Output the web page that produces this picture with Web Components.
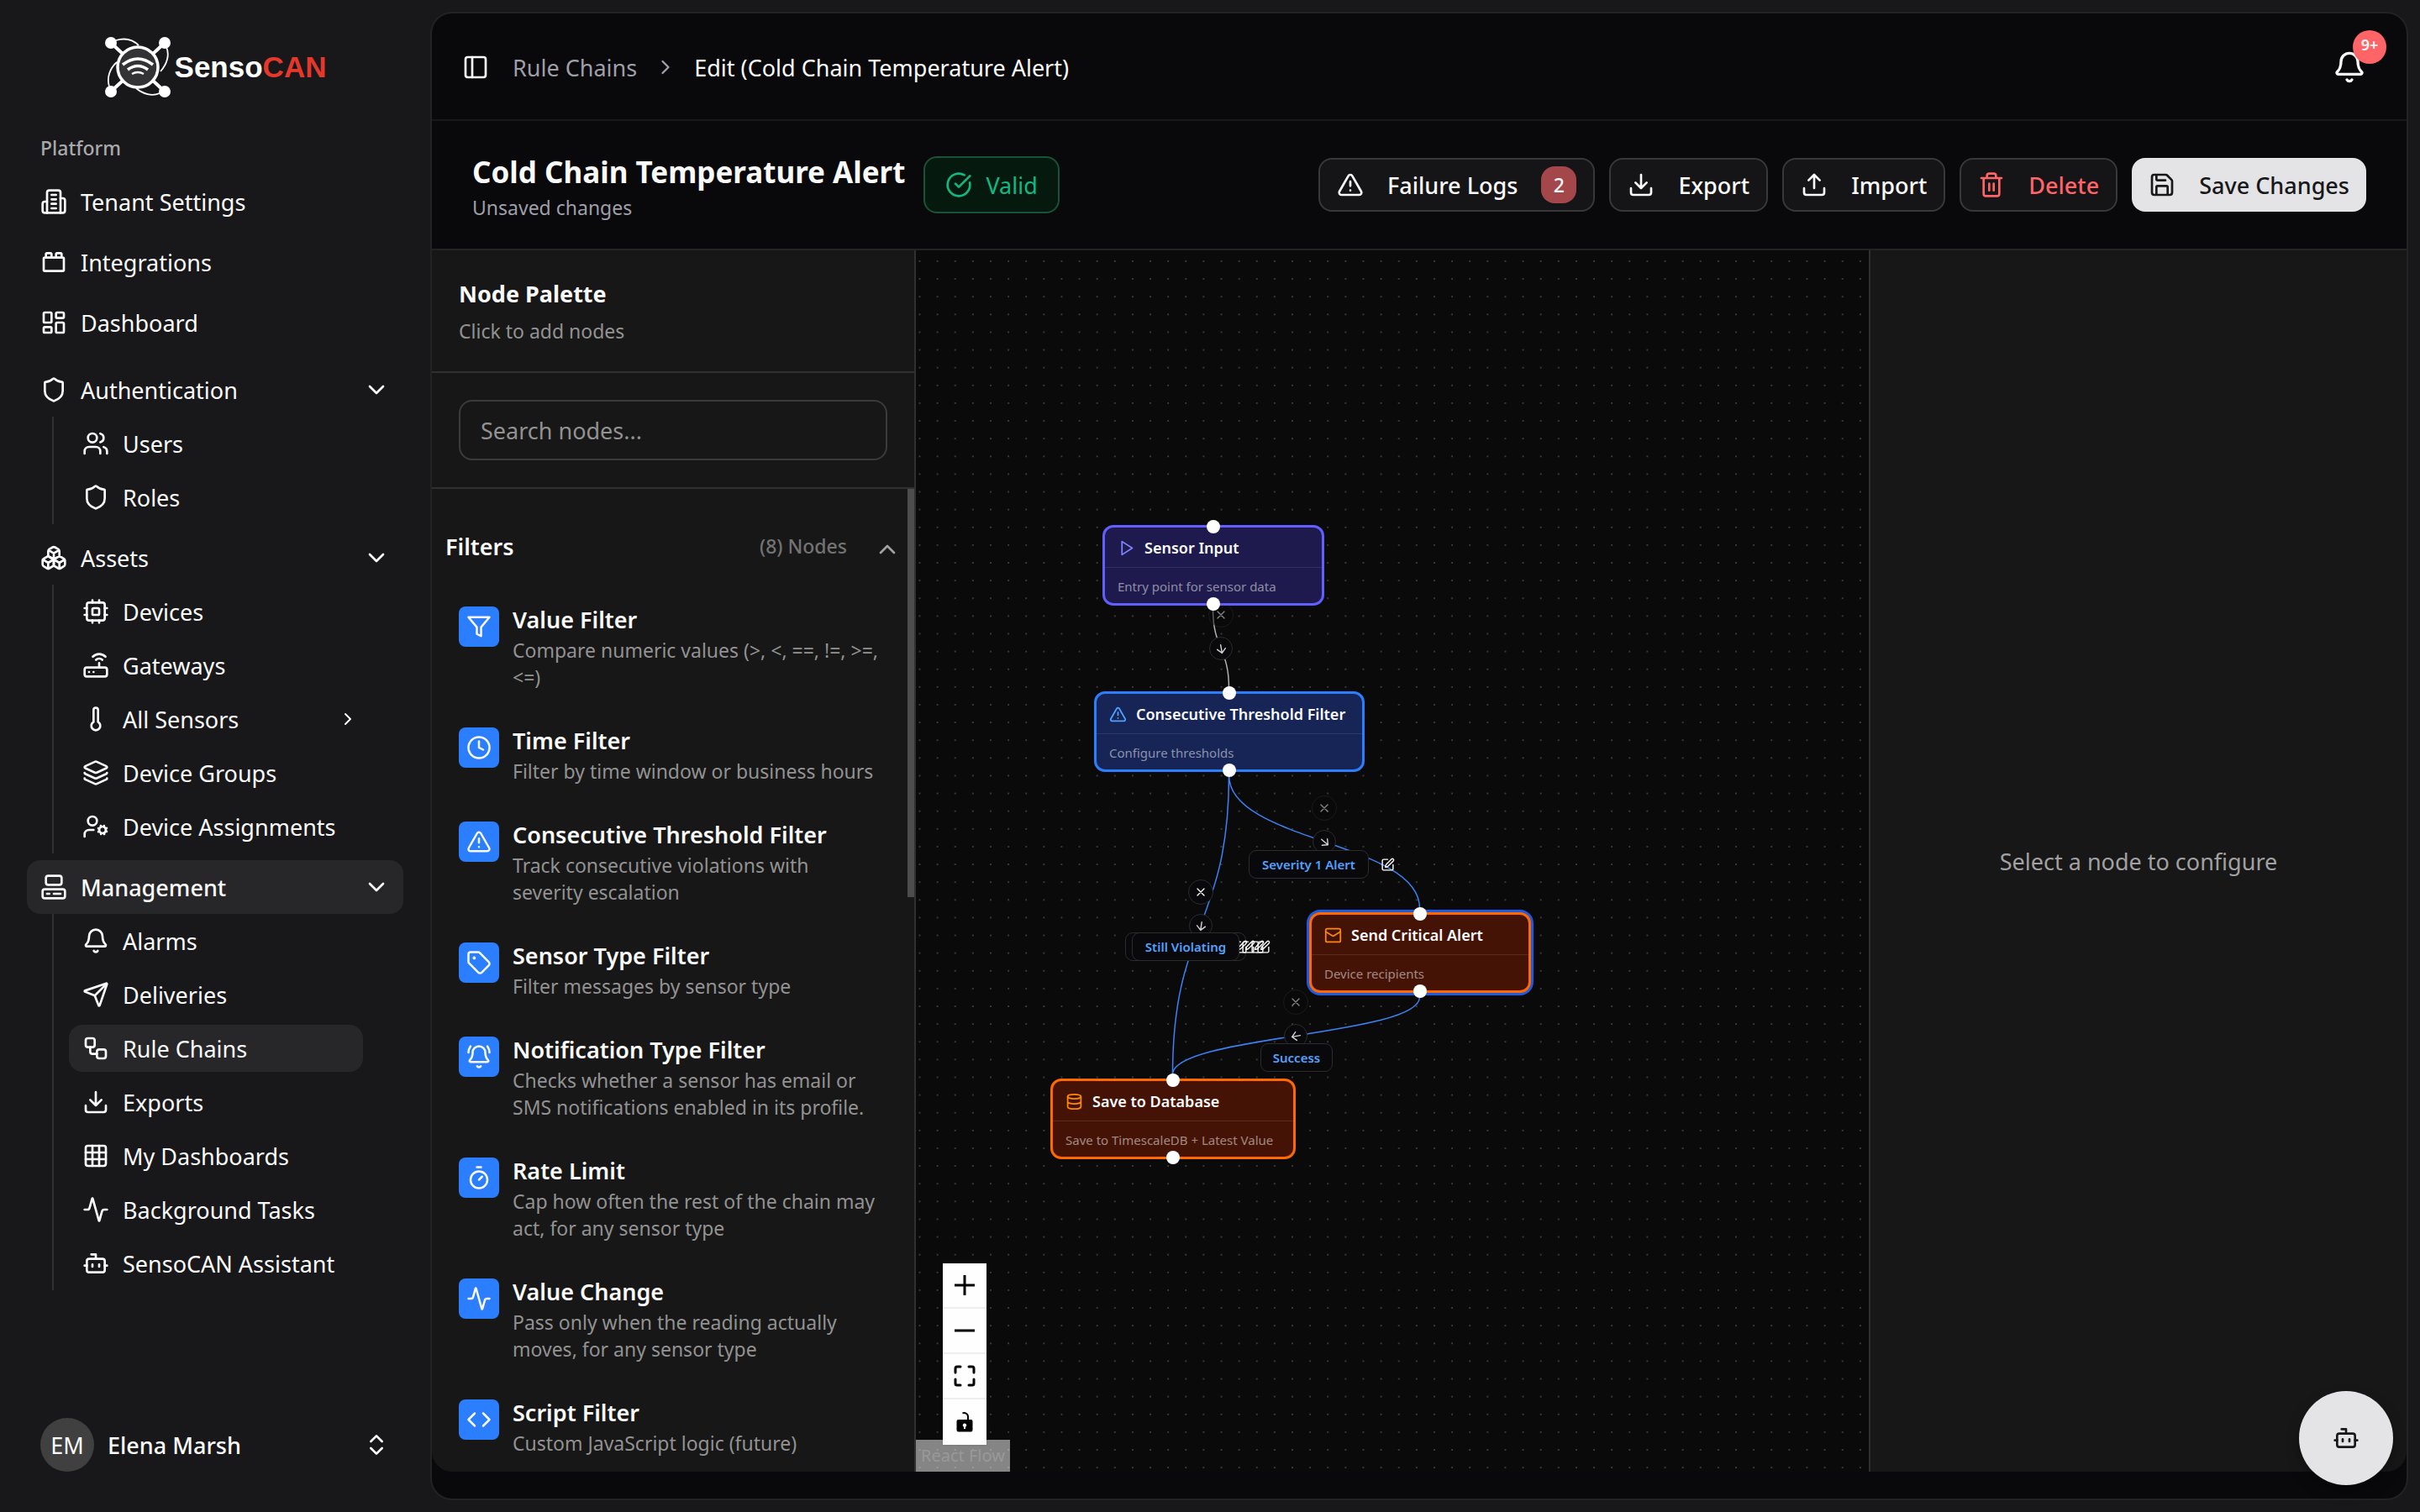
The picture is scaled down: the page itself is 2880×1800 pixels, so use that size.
<!DOCTYPE html>
<html lang="en">
<head>
<meta charset="utf-8">
<meta name="viewport" content="width=device-width, initial-scale=1">
<title>SensoCAN - Rule Chains</title>
<style>
  html, body {
    margin: 0;
    height: 100%;
    background: #18181b;
    color: #fafafa;
    font-family: "Noto Sans", "Open Sans", sans-serif;
    font-size: 27px;
  }
</style>
</head>
<body>
<app-shell></app-shell>

<script>
// Stroke icons on a 24x24 grid
const ICONS = {
  building: '<path d="M6 22V4a2 2 0 0 1 2-2h8a2 2 0 0 1 2 2v18Z"/><path d="M6 12H4a2 2 0 0 0-2 2v6a2 2 0 0 0 2 2h2M18 9h2a2 2 0 0 1 2 2v9a2 2 0 0 1-2 2h-2M10 6h4M10 10h4M10 14h4M10 18h4"/>',
  brick: '<rect width="18" height="12" x="3" y="8" rx="1"/><path d="M10 8V5c0-.6-.4-1-1-1H6a1 1 0 0 0-1 1v3M19 8V5c0-.6-.4-1-1-1h-3a1 1 0 0 0-1 1v3"/>',
  dashboard: '<rect width="7" height="9" x="3" y="3" rx="1"/><rect width="7" height="5" x="14" y="3" rx="1"/><rect width="7" height="9" x="14" y="12" rx="1"/><rect width="7" height="5" x="3" y="16" rx="1"/>',
  shield: '<path d="M20 13c0 5-3.5 7.5-7.66 8.95a1 1 0 0 1-.67-.01C7.5 20.5 4 18 4 13V6a1 1 0 0 1 1-1c2 0 4.5-1.2 6.24-2.72a1.17 1.17 0 0 1 1.52 0C14.51 3.81 17 5 19 5a1 1 0 0 1 1 1z"/>',
  users: '<path d="M16 21v-2a4 4 0 0 0-4-4H6a4 4 0 0 0-4 4v2M22 21v-2a4 4 0 0 0-3-3.87M16 3.13a4 4 0 0 1 0 7.75"/><circle cx="9" cy="7" r="4"/>',
  boxes: '<path d="M2.97 12.92A2 2 0 0 0 2 14.63v3.24a2 2 0 0 0 .97 1.71l3 1.8a2 2 0 0 0 2.06 0L12 19v-5.5l-5-3-4.03 2.42Z"/><path d="m7 16.5-4.74-2.85M7 16.5l5-3M7 16.5v5.17M12 13.5V19l3.97 2.38a2 2 0 0 0 2.06 0l3-1.8a2 2 0 0 0 .97-1.71v-3.24a2 2 0 0 0-.97-1.71L17 10.5l-5 3ZM17 16.5l-5-3M17 16.5l4.74-2.85M17 16.5v5.17M7.97 4.42A2 2 0 0 0 7 6.13v4.37l5 3 5-3V6.13a2 2 0 0 0-.97-1.71l-3-1.8a2 2 0 0 0-2.06 0l-3 1.8ZM12 8 7.26 5.15M12 8l4.74-2.85M12 13.5V8"/>',
  cpu: '<rect width="16" height="16" x="4" y="4" rx="2"/><rect width="6" height="6" x="9" y="9" rx="1"/><path d="M15 2v2M15 20v2M2 15h2M2 9h2M20 15h2M20 9h2M9 2v2M9 20v2"/>',
  router: '<rect width="20" height="8" x="2" y="14" rx="2"/><path d="M6.01 18H6M10.01 18H10M15 10v4M17.84 7.17a4 4 0 0 0-5.66 0M20.66 4.34a8 8 0 0 0-11.31 0"/>',
  thermometer: '<path d="M14 4v10.54a4 4 0 1 1-4 0V4a2 2 0 0 1 4 0Z"/>',
  layers: '<path d="M12.83 2.18a2 2 0 0 0-1.66 0L2.6 6.08a1 1 0 0 0 0 1.83l8.58 3.91a2 2 0 0 0 1.66 0l8.58-3.9a1 1 0 0 0 0-1.83z"/><path d="M2 12a1 1 0 0 0 .58.91l8.6 3.91a2 2 0 0 0 1.65 0l8.58-3.9A1 1 0 0 0 22 12M2 17a1 1 0 0 0 .58.91l8.6 3.91a2 2 0 0 0 1.65 0l8.58-3.9A1 1 0 0 0 22 17"/>',
  userCog: '<circle cx="18" cy="15" r="3"/><circle cx="9" cy="7" r="4"/><path d="M10 15H6a4 4 0 0 0-4 4v2M21.7 16.4l-.9-.3M15.2 13.9l-.9-.3M16.6 18.7l.3-.9M19.1 12.2l.3-.9M19.6 18.7l-.4-1M16.8 12.3l-.4-1M14.3 16.6l1-.4M20.7 13.8l1-.4"/>',
  computer: '<rect width="14" height="8" x="5" y="2" rx="2"/><rect width="20" height="8" x="2" y="14" rx="2"/><path d="M6 18h2M12 18h6"/>',
  bell: '<path d="M10.268 21a2 2 0 0 0 3.464 0M3.262 15.326A1 1 0 0 0 4 17h16a1 1 0 0 0 .74-1.673C19.41 13.956 18 12.499 18 8A6 6 0 0 0 6 8c0 4.499-1.411 5.956-2.738 7.326"/>',
  bellRing: '<path d="M10.268 21a2 2 0 0 0 3.464 0M22 8c0-2.3-.8-4.3-2-6M3.262 15.326A1 1 0 0 0 4 17h16a1 1 0 0 0 .74-1.673C19.41 13.956 18 12.499 18 8A6 6 0 0 0 6 8c0 4.499-1.411 5.956-2.738 7.326M4 2C2.8 3.7 2 5.7 2 8"/>',
  send: '<path d="M14.536 21.686a.5.5 0 0 0 .937-.024l6.5-19a.496.496 0 0 0-.635-.635l-19 6.5a.5.5 0 0 0-.024.937l7.93 3.18a2 2 0 0 1 1.112 1.11zM21.854 2.147l-10.94 10.939"/>',
  workflow: '<rect width="8" height="8" x="3" y="3" rx="2"/><path d="M7 11v4a2 2 0 0 0 2 2h4"/><rect width="8" height="8" x="13" y="13" rx="2"/>',
  download: '<path d="M12 15V3M21 15v4a2 2 0 0 1-2 2H5a2 2 0 0 1-2-2v-4M7 10l5 5 5-5"/>',
  upload: '<path d="M12 3v12M17 8l-5-5-5 5M21 15v4a2 2 0 0 1-2 2H5a2 2 0 0 1-2-2v-4"/>',
  grid: '<rect width="18" height="18" x="3" y="3" rx="2"/><path d="M3 9h18M3 15h18M9 3v18M15 3v18"/>',
  activity: '<path d="M22 12h-2.48a2 2 0 0 0-1.93 1.46l-2.35 8.36a.25.25 0 0 1-.48 0L9.24 2.18a.25.25 0 0 0-.48 0l-2.35 8.36A2 2 0 0 1 4.49 12H2"/>',
  bot: '<path d="M12 8V4H8"/><rect width="16" height="12" x="4" y="8" rx="2"/><path d="M2 14h2M20 14h2M15 13v2M9 13v2"/>',
  down: '<path d="m6 9 6 6 6-6"/>',
  up: '<path d="m18 15-6-6-6 6"/>',
  right: '<path d="m9 18 6-6-6-6"/>',
  upDown: '<path d="m7 15 5 5 5-5M7 9l5-5 5 5"/>',
  panel: '<rect width="18" height="18" x="3" y="3" rx="2"/><path d="M9 3v18"/>',
  check: '<path d="M21.801 10A10 10 0 1 1 17 3.335M9 11l3 3L22 4"/>',
  alert: '<path d="m21.73 18-8-14a2 2 0 0 0-3.48 0l-8 14A2 2 0 0 0 4 21h16a2 2 0 0 0 1.73-3M12 9v4M12 17h.01"/>',
  trash: '<path d="M3 6h18M19 6v14a2 2 0 0 1-2 2H7a2 2 0 0 1-2-2V6M8 6V4a2 2 0 0 1 2-2h4a2 2 0 0 1 2 2v2M10 11v6M14 11v6"/>',
  save: '<path d="M15.2 3a2 2 0 0 1 1.4.6l3.8 3.8a2 2 0 0 1 .6 1.4V19a2 2 0 0 1-2 2H5a2 2 0 0 1-2-2V5a2 2 0 0 1 2-2zM17 21v-7a1 1 0 0 0-1-1H8a1 1 0 0 0-1 1v7M7 3v4a1 1 0 0 0 1 1h7"/>',
  funnel: '<path d="M22 3H2l8 9.46V19l4 2v-8.54L22 3z"/>',
  clock: '<circle cx="12" cy="12" r="10"/><path d="M12 6v6l4 2"/>',
  tag: '<path d="M12.586 2.586A2 2 0 0 0 11.172 2H4a2 2 0 0 0-2 2v7.172a2 2 0 0 0 .586 1.414l8.704 8.704a2.426 2.426 0 0 0 3.42 0l6.58-6.58a2.426 2.426 0 0 0 0-3.42z"/><circle cx="7.5" cy="7.5" r=".5" fill="currentColor"/>',
  timer: '<path d="M10 2h4M12 14l3-3"/><circle cx="12" cy="14" r="8"/>',
  code: '<path d="m16 18 6-6-6-6M8 6l-6 6 6 6"/>',
  play: '<path d="m6 3 14 9-14 9z"/>',
  mail: '<rect width="20" height="18" x="2" y="3" rx="2"/><path d="m22 7-8.97 5.7a1.94 1.94 0 0 1-2.06 0L2 7"/>',
  database: '<ellipse cx="12" cy="5" rx="9" ry="3"/><path d="M3 5v14a9 3 0 0 0 18 0V5M3 12a9 3 0 0 0 18 0"/>',
  pen: '<path d="M12 3H5a2 2 0 0 0-2 2v14a2 2 0 0 0 2 2h14a2 2 0 0 0 2-2v-7"/><path d="M18.375 2.625a1 1 0 0 1 3 3l-9.013 9.014a2 2 0 0 1-.853.505l-2.873.84a.5.5 0 0 1-.62-.62l.84-2.873a2 2 0 0 1 .506-.852z"/>',
  arrow: '<path d="M5 12h14M12 5l7 7-7 7"/>',
  close: '<path d="M18 6 6 18M6 6l12 12"/>',
  plus: '<path stroke-width="3" stroke-linecap="butt" d="M12 0v24M0 12h24"/>',
  minus: '<path stroke-width="3" stroke-linecap="butt" d="M0 12h24"/>',
  fit: '<path stroke-width="3" d="M1 8V3a2 2 0 0 1 2-2h4M17 1h4a2 2 0 0 1 2 2v5M23 16v5a2 2 0 0 1-2 2h-4M7 23H3a2 2 0 0 1-2-2v-5"/>',
  unlock: '<path fill="currentColor" stroke="none" fill-rule="evenodd" d="M5 9h10V5.500a3.500 3.500 0 0 0-5-3.200L9 .7A5.500 5.500 0 0 1 17 5.500V9h2.500a2 2 0 0 1 2 2v10.500a2 2 0 0 1-2 2h-15a2 2 0 0 1-2-2V11a2 2 0 0 1 2-2zm7 4.500a2.200 2.200 0 0 0-1 4.200V20h2v-2.300a2.200 2.200 0 0 0-1-4.200z"/>'
};

function define(name, render) {
  customElements.define(name, class extends HTMLElement {
    connectedCallback() {
      if (this.shadowRoot) return;
      this.attachShadow({ mode: 'open' }).innerHTML = render(this);
    }
  });
}

define('ui-icon', el => `
  <style>
    :host { display: inline-flex; flex: none; width: var(--icon, 32px); height: var(--icon, 32px); }
    svg {
      width: 100%; height: 100%; overflow: visible;
      fill: none; stroke: currentColor; stroke-width: 2;
      stroke-linecap: round; stroke-linejoin: round;
    }
  </style>
  <svg viewBox="0 0 24 24" aria-hidden="true">${ICONS[el.getAttribute('name')]}</svg>
`);

/* ---------- Sidebar ---------- */

define('brand-logo', () => `
  <style>
    :host {
      display: flex; align-items: center; justify-content: center; gap: 4px;
      box-sizing: border-box; height: 144px; padding-top: 16px;
    }
    svg { width: 80px; height: 74px; }
    span { font: 700 35px/40px "Liberation Sans", Arial, sans-serif; color: #fff; }
    b { color: #e5382d; }
  </style>
  <svg viewBox="0 0 80 74" fill="none" stroke="#fff" aria-hidden="true">
    <g stroke-width="1.800">
      <path d="M14 5c10-3 20-1 27 6M74 13c4 9 1 20-7 29M6 60c-3-10 0-21 9-29M66 68c-9 4-20 1-28-6"/>
    </g>
    <g stroke-width="4"><path d="m8 8 14 13M72 8 58 21M8 66l14-13M72 66 58 53"/></g>
    <g fill="#fff" stroke="none">
      <circle cx="8" cy="8" r="7"/><circle cx="72" cy="8" r="7"/><circle cx="8" cy="66" r="7"/><circle cx="72" cy="66" r="7"/>
    </g>
    <circle cx="40" cy="37" r="24" fill="#333336" stroke-width="3.500"/>
    <path stroke-width="3.500" d="M22 34q18-14 36 0M28 40q12-9 24 0"/>
    <path stroke-width="2.500" d="M33 45q7-4 14 0"/>
  </svg>
  <span>Senso<b>CAN</b></span>
`);

define('side-item', el => `
  <style>
    :host { display: block; }
    a {
      display: flex; align-items: center; gap: 16px;
      box-sizing: border-box; height: 64px; padding: 0 16px;
      border-radius: 16px; color: inherit; text-decoration: none; white-space: nowrap;
    }
    :host([sub]) a { height: 56px; }
    :host([active]) a { background: #27272a; }
    :host([bold]) a { font-weight: 500; }
    .label { flex: 1; }
    .small { --icon: 24px; margin-right: -10px; }
  </style>
  <a href="#">
    <ui-icon name="${el.getAttribute('icon')}"></ui-icon>
    <span class="label"><slot></slot></span>
    ${el.hasAttribute('open') ? '<ui-icon name="down"></ui-icon>' : ''}
    ${el.hasAttribute('more') ? '<ui-icon class="small" name="right"></ui-icon>' : ''}
  </a>
`);

define('side-group', el => `
  <style>
    :host { display: block; }
    .sub {
      display: flex; flex-direction: column; gap: 8px;
      margin-left: 30px; padding: 4px 48px 4px 18px;
      border-left: 2px solid #303033;
    }
  </style>
  <side-item icon="${el.getAttribute('icon')}" open ${el.hasAttribute('active') ? 'active bold' : ''}>${el.getAttribute('label')}</side-item>
  <div class="sub"><slot></slot></div>
`);

define('app-sidebar', () => `
  <style>
    :host {
      display: flex; flex-direction: column; box-sizing: border-box;
      flex: none; width: 514px; padding: 0 34px 32px 32px;
    }
    h2 { margin: 0; padding-left: 16px; font-size: 23px; line-height: 64px; font-weight: 500; color: #a9a9ac; }
    nav { display: flex; flex-direction: column; gap: 8px; }
    .groups { display: flex; flex-direction: column; gap: 8px; margin-top: 8px; }
    .user {
      display: flex; align-items: center; gap: 16px;
      margin-top: auto; padding: 16px; border: 0; border-radius: 16px;
      background: none; color: inherit; font: inherit; font-weight: 500; text-align: left;
    }
    .user .name { flex: 1; }
    .avatar {
      display: grid; place-items: center; width: 64px; height: 64px;
      border-radius: 50%; background: #404040; font-weight: 400;
    }
  </style>
  <brand-logo></brand-logo>
  <h2>Platform</h2>
  <nav aria-label="Platform">
    <side-item icon="building">Tenant Settings</side-item>
    <side-item icon="brick">Integrations</side-item>
    <side-item icon="dashboard">Dashboard</side-item>
    <div class="groups">
      <side-group icon="shield" label="Authentication">
        <side-item sub icon="users">Users</side-item>
        <side-item sub icon="shield">Roles</side-item>
      </side-group>
      <side-group icon="boxes" label="Assets">
        <side-item sub icon="cpu">Devices</side-item>
        <side-item sub icon="router">Gateways</side-item>
        <side-item sub more icon="thermometer">All Sensors</side-item>
        <side-item sub icon="layers">Device Groups</side-item>
        <side-item sub icon="userCog">Device Assignments</side-item>
      </side-group>
      <side-group icon="computer" label="Management" active>
        <side-item sub icon="bell">Alarms</side-item>
        <side-item sub icon="send">Deliveries</side-item>
        <side-item sub active icon="workflow">Rule Chains</side-item>
        <side-item sub icon="download">Exports</side-item>
        <side-item sub icon="grid">My Dashboards</side-item>
        <side-item sub icon="activity">Background Tasks</side-item>
        <side-item sub icon="bot">SensoCAN Assistant</side-item>
      </side-group>
    </div>
  </nav>
  <button class="user">
    <span class="avatar">EM</span>
    <span class="name">Elena Marsh</span>
    <ui-icon name="upDown"></ui-icon>
  </button>
`);

/* ---------- Header and toolbar ---------- */

define('top-bar', () => `
  <style>
    :host {
      display: flex; align-items: center; justify-content: space-between;
      box-sizing: border-box; flex: none; height: 128px; padding: 2px 48px 0 36px;
      border-bottom: 2px solid #18181b;
    }
    nav { display: flex; align-items: center; gap: 20px; }
    a { color: #9f9fa9; text-decoration: none; margin-left: 8px; }
    button { border: 0; padding: 0; background: none; color: inherit; display: flex; position: relative; }
    .crumb { --icon: 28px; color: #9f9fa9; }
    .bell { --icon: 40px; }
    .count {
      position: absolute; left: 24px; top: -24px;
      width: 40px; height: 40px; border-radius: 50%;
      background: #ff6467; font: 600 18px/34px "Noto Sans", sans-serif; text-align: center;
    }
  </style>
  <nav aria-label="Breadcrumb">
    <button aria-label="Toggle sidebar"><ui-icon name="panel"></ui-icon></button>
    <a href="#">Rule Chains</a>
    <ui-icon class="crumb" name="right"></ui-icon>
    <span>Edit (Cold Chain Temperature Alert)</span>
  </nav>
  <button aria-label="Notifications"><ui-icon class="bell" name="bell"></ui-icon><span class="count">9+</span></button>
`);

define('tool-button', el => `
  <style>
    :host { display: block; }
    button {
      display: flex; align-items: center; gap: 28px;
      box-sizing: border-box; height: 64px; padding: 0 20px;
      border: 2px solid #38383b; border-radius: 16px;
      background: #151518; color: inherit; font: inherit; font-weight: 500; white-space: nowrap;
    }
    :host([danger]) button { color: #ff6467; }
    :host([primary]) button { border: 0; background: #e4e4e7; color: #18181b; }
  </style>
  <button><ui-icon name="${el.getAttribute('icon')}"></ui-icon><slot></slot></button>
`);

define('tool-bar', () => `
  <style>
    :host {
      display: flex; align-items: center; justify-content: space-between;
      box-sizing: border-box; flex: none; height: 154px; padding: 0 48px;
      border-bottom: 2px solid #232325;
    }
    .title, .actions { display: flex; align-items: center; }
    .title { gap: 22px; }
    .heading { padding-top: 6px; }
    .actions { gap: 17px; }
    h1 { margin: 0; font-size: 35px; line-height: 48px; font-weight: 700; }
    p { margin: 0; font-size: 23px; line-height: 36px; color: #9f9fa9; }
    .valid {
      display: flex; align-items: center; gap: 16px;
      box-sizing: border-box; height: 68px; padding: 0 24px;
      border: 2px solid #195238; border-radius: 16px; background: #05190f; color: #10b981;
    }
    .fails {
      min-width: 42px; border-radius: 16px; background: #a3474a;
      font-size: 23px; line-height: 44px; text-align: center;
    }
  </style>
  <div class="title">
    <div class="heading">
      <h1>Cold Chain Temperature Alert</h1>
      <p>Unsaved changes</p>
    </div>
    <span class="valid"><ui-icon name="check"></ui-icon>Valid</span>
  </div>
  <div class="actions">
    <tool-button icon="alert">Failure Logs <span class="fails">2</span></tool-button>
    <tool-button icon="download">Export</tool-button>
    <tool-button icon="upload">Import</tool-button>
    <tool-button icon="trash" danger>Delete</tool-button>
    <tool-button icon="save" primary>Save Changes</tool-button>
  </div>
`);

/* ---------- Node palette ---------- */

define('palette-item', el => `
  <style>
    :host { display: block; }
    button {
      display: flex; align-items: flex-start; gap: 16px; width: 100%;
      padding: 16px; border: 0; background: none; color: inherit; font: inherit; text-align: left;
    }
    .tile {
      display: grid; place-items: center; flex: none; width: 48px; height: 48px;
      margin-top: 4px; border-radius: 8px; background: #2b7fff; --icon: 30px;
    }
    .name { display: block; line-height: 40px; font-weight: 600; }
    .desc { display: block; font-size: 23px; line-height: 32px; color: #929292; }
  </style>
  <button>
    <span class="tile"><ui-icon name="${el.getAttribute('icon')}"></ui-icon></span>
    <span><span class="name">${el.getAttribute('label')}</span><span class="desc"><slot></slot></span></span>
  </button>
`);

define('node-palette', () => `
  <style>
    :host {
      display: flex; flex-direction: column; box-sizing: border-box;
      flex: none; width: 576px; border-right: 2px solid #303030;
      border-bottom-left-radius: 24px; background: #171717; overflow: hidden;
    }
    header { padding: 32px; border-bottom: 2px solid #303030; }
    h2 { margin: 0 0 8px; font-size: 27px; line-height: 40px; font-weight: 700; }
    p { margin: 0; font-size: 23px; line-height: 32px; color: #929292; }
    .search { padding: 32px; border-bottom: 2px solid #303030; }
    input {
      display: block; box-sizing: border-box; width: 100%; height: 72px; padding: 0 24px;
      border: 2px solid #3b3b3b; border-radius: 16px; background: #171717;
      color: inherit; font: inherit;
    }
    input::placeholder { color: #929292; opacity: 1; }
    .list { position: relative; flex: 1; min-height: 0; overflow: hidden; padding: 16px; }
    .list .thumb { position: absolute; top: 0; right: 0; width: 8px; height: 486px; background: #4d4d4d; }
    .head {
      display: flex; align-items: center; width: 100%; height: 104px; padding: 0;
      border: 0; background: none; color: inherit; font: inherit; font-weight: 600; text-align: left;
    }
    .head .count { margin-left: auto; margin-right: 32px; font-size: 23px; font-weight: 500; color: #737373; }
    .head ui-icon { color: #a1a1a1; margin-top: 8px; }
    .items { display: flex; flex-direction: column; gap: 8px; padding-right: 8px; }
  </style>
  <header>
    <h2>Node Palette</h2>
    <p>Click to add nodes</p>
  </header>
  <div class="search"><input type="text" placeholder="Search nodes..." aria-label="Search nodes"></div>
  <div class="list">
    <button class="head">Filters <span class="count">(8) Nodes</span><ui-icon name="up"></ui-icon></button>
    <div class="items">
      <palette-item icon="funnel" label="Value Filter">Compare numeric values (&gt;, &lt;, ==, !=, &gt;=, &lt;=)</palette-item>
      <palette-item icon="clock" label="Time Filter">Filter by time window or business hours</palette-item>
      <palette-item icon="alert" label="Consecutive Threshold Filter">Track consecutive violations with severity escalation</palette-item>
      <palette-item icon="tag" label="Sensor Type Filter">Filter messages by sensor type</palette-item>
      <palette-item icon="bellRing" label="Notification Type Filter">Checks whether a sensor has email or SMS notifications enabled in its profile.</palette-item>
      <palette-item icon="timer" label="Rate Limit">Cap how often the rest of the chain may act, for any sensor type</palette-item>
      <palette-item icon="activity" label="Value Change">Pass only when the reading actually moves, for any sensor type</palette-item>
      <palette-item icon="code" label="Script Filter">Custom JavaScript logic (future)</palette-item>
    </div>
    <span class="thumb"></span>
  </div>
`);

/* ---------- Flow canvas ---------- */

define('flow-node', el => `
  <style>
    :host {
      position: absolute; left: ${el.getAttribute('x')}px; top: ${el.getAttribute('y')}px;
      width: ${el.getAttribute('w')}px; height: 96px;
      display: flex; flex-direction: column; box-sizing: border-box;
      border: 3px solid #615fff; border-radius: 13px; background: #1e1a4d; --tint: #7c86ff;
      white-space: nowrap;
    }
    :host([kind="filter"]) { border-color: #2b7fff; background: #162456; --tint: #51a2ff; }
    :host([kind="action"]) { border-color: #ff6900; background: #441306; --tint: #ff8904; }
    :host([selected]) { box-shadow: 0 0 0 3px #1f5be0; }
    .head {
      display: flex; flex: none; align-items: center; gap: 11px; height: 46px; padding: 1px 15px 0;
      border-bottom: 1px solid #ffffff1a; font-size: 18px; font-weight: 600;
    }
    .head ui-icon { --icon: 21px; color: var(--tint); }
    .body { padding: 0 15px; font-size: 15px; line-height: 44px; color: #ffffff80; }
    i {
      position: absolute; left: 50%; width: 16px; height: 16px; margin-left: -8px;
      border-radius: 50%; background: #fff;
    }
    .in { top: -9px; }
    .out { bottom: -9px; }
  </style>
  <div class="head"><ui-icon name="${el.getAttribute('icon')}"></ui-icon>${el.getAttribute('label')}</div>
  <div class="body"><slot></slot></div>
  <i class="in"></i><i class="out"></i>
`);

// Direction dot in the middle of an edge, with its remove button above
define('edge-marker', el => `
  <style>
    :host { position: absolute; left: ${el.getAttribute('x')}px; top: ${el.getAttribute('y')}px; }
    .dot, button {
      position: absolute; left: -14px; top: -14px; box-sizing: border-box;
      display: grid; place-items: center; width: 28px; height: 28px; padding: 0;
      border: 1px solid #2c2c2f; border-radius: 50%; background: #09090b; color: #d4d4d8; --icon: 17px;
    }
    .dot ui-icon { transform: rotate(${el.getAttribute('turn')}deg); }
    button { left: -15px; top: -55px; width: 30px; height: 30px; opacity: .5; color: #fff; --icon: 16px; }
    :host([hot]) button { opacity: 1; }
  </style>
  <span class="dot"><ui-icon name="arrow"></ui-icon></span>
  <button aria-label="Remove connection"><ui-icon name="close"></ui-icon></button>
`);

define('edge-label', el => `
  <style>
    :host {
      position: absolute; left: ${el.getAttribute('x')}px; top: ${el.getAttribute('y')}px;
      width: ${el.getAttribute('w')}px; height: 34px; box-sizing: border-box;
      border: 1px solid #2c2c2f; border-radius: 9px; background: #09090b;
      color: #51a2ff; font-size: 15px; line-height: 32px; font-weight: 600;
      text-align: center; white-space: nowrap;
    }
  </style>
  <slot></slot>
`);

define('flow-canvas', () => `
  <style>
    :host { display: block; position: relative; flex: 1; min-width: 0; overflow: hidden; background: #0a0a0a; }
    .bg { position: absolute; inset: 0; width: 100%; height: 100%; }
    .edit { position: absolute; --icon: 17px; color: #fff; padding: 0; border: 0; background: none; display: flex; }
    .controls {
      position: absolute; left: 32px; bottom: 32px; z-index: 2;
      display: flex; flex-direction: column; background: #fefefe; box-shadow: 0 0 2px 1px #00000014;
    }
    .controls button {
      display: grid; place-items: center; width: 52px; height: 54px; padding: 0;
      border: 0; border-bottom: 2px solid #eee; background: none; color: #000; --icon: 24px;
    }
    .controls button:last-child { border-bottom: 0; }
    .credit {
      position: absolute; left: 0; bottom: 0; padding: 0 6px;
      background: #ffffff80; color: #999; font-size: 20px; line-height: 38px; text-decoration: none;
    }
  </style>
  <svg class="bg" aria-hidden="true">
    <defs>
      <pattern id="dots" x="3.500" y="12" width="21.120" height="21.120" patternUnits="userSpaceOnUse">
        <circle cx="1" cy="1" r=".8" fill="#777"/>
      </pattern>
    </defs>
    <rect width="100%" height="100%" fill="url(#dots)"/>
    <g fill="none" stroke="#3b82f6" stroke-width="1.500">
      <path stroke="#b1b1b7" d="M353.500 427C353.500 474 372.500 474 372.500 521"/>
      <path d="M372.500 625C372.500 704 599.500 704 599.500 783"/>
      <path d="M372.500 625C372.500 803 305.500 803 305.500 981"/>
      <path d="M599.500 889C599.500 935 305.500 935 305.500 981"/>
    </g>
  </svg>

  <edge-marker x="363" y="474" turn="80"></edge-marker>
  <edge-marker x="486" y="704" turn="40"></edge-marker>
  <edge-marker x="339" y="804" turn="98" hot></edge-marker>
  <edge-marker x="452" y="935" turn="170"></edge-marker>

  <edge-label x="249" y="812" w="144"></edge-label>
  <button class="edit" style="left: 553px; top: 723px" aria-label="Edit label"><ui-icon name="pen"></ui-icon></button>
  <button class="edit" style="left: 405px; top: 821px" aria-label="Edit label"><ui-icon name="pen"></ui-icon></button>
  <button class="edit" style="left: 398px; top: 821px" aria-label="Edit label"><ui-icon name="pen"></ui-icon></button>
  <button class="edit" style="left: 387px; top: 821px" aria-label="Edit label"><ui-icon name="pen"></ui-icon></button>
  <button class="edit" style="left: 378px; top: 821px" aria-label="Edit label"><ui-icon name="pen"></ui-icon></button>

  <edge-label x="396" y="714" w="143">Severity 1 Alert</edge-label>
  <edge-label x="257" y="812" w="128">Still Violating</edge-label>
  <edge-label x="410" y="944" w="86">Success</edge-label>

  <flow-node x="222" y="327" w="264" icon="play" label="Sensor Input">Entry point for sensor data</flow-node>
  <flow-node x="212" y="525" w="322" kind="filter" icon="alert" label="Consecutive Threshold Filter">Configure thresholds</flow-node>
  <flow-node x="468" y="788" w="264" kind="action" selected icon="mail" label="Send Critical Alert">Device recipients</flow-node>
  <flow-node x="160" y="986" w="292" kind="action" icon="database" label="Save to Database">Save to TimescaleDB + Latest Value</flow-node>

  <div class="controls">
    <button aria-label="Zoom in"><ui-icon name="plus"></ui-icon></button>
    <button aria-label="Zoom out"><ui-icon name="minus"></ui-icon></button>
    <button aria-label="Fit view"><ui-icon name="fit"></ui-icon></button>
    <button aria-label="Toggle interactivity"><ui-icon name="unlock"></ui-icon></button>
  </div>
  <a class="credit" href="#">React Flow</a>
`);

define('config-panel', () => `
  <style>
    :host {
      display: grid; place-items: center; box-sizing: border-box; flex: none; width: 640px;
      border-left: 2px solid #303030; border-bottom-right-radius: 24px;
      background: #171717; color: #a1a1a1;
    }
  </style>
  <slot></slot>
`);

define('chat-button', () => `
  <style>
    :host { position: fixed; right: 32px; bottom: 32px; z-index: 5; }
    button {
      display: grid; place-items: center; width: 112px; height: 112px; padding: 0;
      border: 0; border-radius: 50%; background: #e4e4e7; color: #18181b;
      box-shadow: 0 8px 16px #0000004d;
    }
  </style>
  <button aria-label="Open assistant"><ui-icon name="bot"></ui-icon></button>
`);

define('app-shell', () => `
  <style>
    :host { display: flex; height: 100vh; }
    main {
      display: flex; flex-direction: column; box-sizing: border-box; flex: 1; min-width: 0;
      margin: 16px 16px 16px 0; padding-bottom: 32px; border-radius: 24px;
      background: #09090b; box-shadow: 0 0 0 2px #232326; overflow: hidden;
    }
    .work { display: flex; flex: 1; min-height: 0; }
  </style>
  <app-sidebar></app-sidebar>
  <main>
    <top-bar></top-bar>
    <tool-bar></tool-bar>
    <div class="work">
      <node-palette></node-palette>
      <flow-canvas></flow-canvas>
      <config-panel>Select a node to configure</config-panel>
    </div>
  </main>
  <chat-button></chat-button>
`);
</script>
</body>
</html>
